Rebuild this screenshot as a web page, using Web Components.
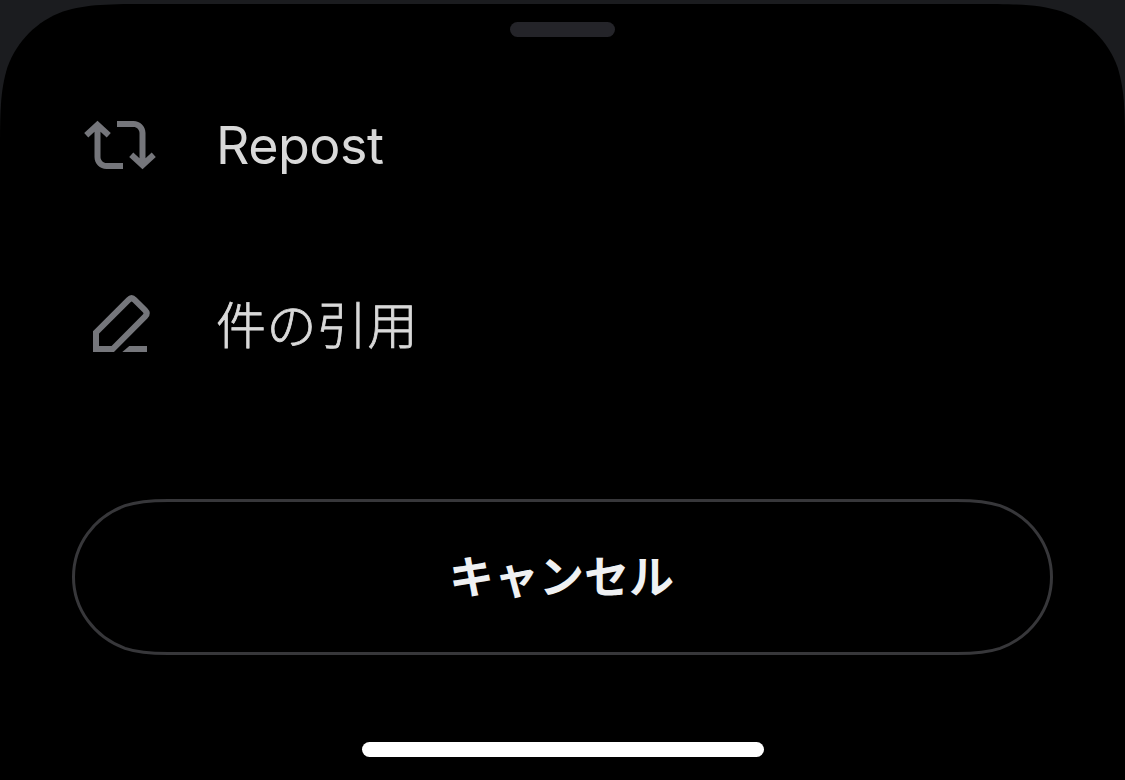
<!DOCTYPE html>
<html lang="ja">
<head>
<meta charset="utf-8">
<title>Repost</title>
<style>
  html, body {
    margin: 0;
    height: 100%;
    overflow: hidden;
    background: #1b1c1f;
  }
</style>
</head>
<body>
<bottom-sheet>
  <sheet-action icon="repost">Repost</sheet-action>
  <sheet-action icon="quote" lang="ja">件の引用</sheet-action>
  <cancel-button slot="footer">キャンセル</cancel-button>
</bottom-sheet>

<script>
const ICONS = {
  repost: `<path fill="currentColor" transform="scale(3)" d="M4.5 3.88l4.432 4.14-1.364 1.46L5.5 7.55V16c0 1.1.896 2 2 2H13v2H7.5c-2.209 0-4-1.79-4-4V7.55L1.432 9.48.068 8.02 4.5 3.88zM16.5 6H11V4h5.5c2.209 0 4 1.79 4 4v8.45l2.068-1.93 1.364 1.46-4.432 4.14-4.432-4.14 1.364-1.46 2.068 1.93V8c0-1.1-.896-2-2-2z"/>`,
  quote: `
    <path fill="none" stroke="currentColor" stroke-width="6" d="M12 60V43.4L44.6 10.8Q47.6 7.8 50.6 10.8L61.2 21.4Q64.2 24.4 61.2 27.4L28.7 60Z"/>
    <path fill="currentColor" d="M38.3 63L45.3 57H63V63Z"/>`,
};

class BottomSheet extends HTMLElement {
  constructor() {
    super();
    const shadowRoot = this.attachShadow({ mode: "open" });
    shadowRoot.innerHTML = `
      <style>
        :host {
          display: flex;
          flex-direction: column;
          align-items: center;
          position: relative;
          isolation: isolate;
          box-sizing: border-box;
          width: 1125px;
          height: 780px;
          padding-top: 22px;
        }
        .shape {
          position: absolute;
          inset: 4px 0 0;
          z-index: -1;
        }
        .handle {
          width: 105px;
          height: 15px;
          border-radius: 8px;
          background: #242429;
        }
        .actions {
          align-self: stretch;
          margin-top: 18px;
        }
        .footer {
          margin-top: 84px;
        }
        .home {
          width: 402px;
          height: 15px;
          margin-top: 87px;
          border-radius: 8px;
          background: #fff;
        }
      </style>
      <svg class="shape" width="1125" height="776">
        <path d="M0 776V153C0 109 0 87 7.5 63C17 37 37 17 63 7.5C87 0 109 0 153 0H972C1016 0 1038 0 1062 7.5C1088 17 1108 37 1117.5 63C1125 87 1125 109 1125 153V776Z"/>
      </svg>
      <div class="handle"></div>
      <div class="actions"><slot></slot></div>
      <div class="footer"><slot name="footer"></slot></div>
      <div class="home"></div>
    `;
  }
}

class SheetAction extends HTMLElement {
  constructor() {
    super();
    const shadowRoot = this.attachShadow({ mode: "open" });
    shadowRoot.innerHTML = `
      <style>
        :host {
          display: flex;
          align-items: center;
          gap: 60px;
          height: 180px;
          padding-left: 84px;
          color: #d9d9d9;
          font: 400 52px/72px Inter, "Noto Sans CJK JP", sans-serif;
          letter-spacing: -0.5px;
        }
        :host([lang="ja"]) {
          font: 300 50px/72px "Noto Sans CJK JP", sans-serif;
          letter-spacing: 0.5px;
          -webkit-text-stroke: 0.8px currentColor;
        }
        svg {
          color: #75767b;
        }
        span {
          padding-top: 2px;
        }
        :host([lang="ja"]) span {
          padding: 0 0 6px;
        }
      </style>
      <svg width="72" height="72" viewBox="0 0 72 72">${ICONS[this.icon] || ""}</svg>
      <span><slot></slot></span>
    `;
  }

  get icon() {
    return this.getAttribute("icon");
  }
}

class CancelButton extends HTMLElement {
  constructor() {
    super();
    const shadowRoot = this.attachShadow({ mode: "open" });
    shadowRoot.innerHTML = `
      <style>
        :host {
          display: flex;
          align-items: center;
          justify-content: center;
          position: relative;
          width: 981px;
          height: 156px;
          color: #eff1f3;
          font: 700 45px/60px "Noto Sans CJK JP", sans-serif;
        }
        svg {
          position: absolute;
          inset: 0;
        }
        span {
          padding: 0 2px 4px 0;
        }
      </style>
      <svg width="981" height="156" fill="none" stroke="#37373a" stroke-width="3">
        <path d="M96 1.5C76 1.5 64 3 53 6.7C22 18 1.5 46 1.5 78C1.5 110 22 138 53 149.3C64 153 76 154.5 96 154.5H885C905 154.5 917 153 928 149.3C959 138 979.5 110 979.5 78C979.5 46 959 18 928 6.7C917 3 905 1.5 885 1.5Z"/>
      </svg>
      <span><slot></slot></span>
    `;
  }
}

customElements.define("bottom-sheet", BottomSheet);
customElements.define("sheet-action", SheetAction);
customElements.define("cancel-button", CancelButton);
</script>
</body>
</html>
